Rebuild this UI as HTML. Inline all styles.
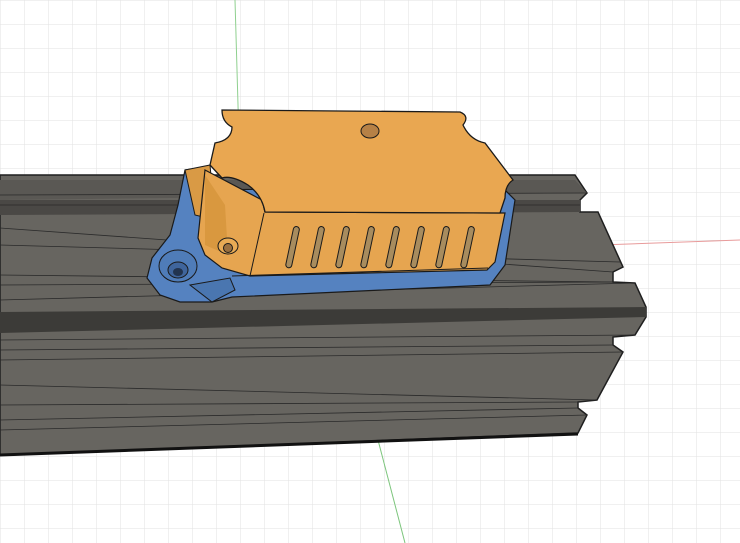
<!DOCTYPE html>
<html><head><style>html,body{margin:0;padding:0;background:#fff;overflow:hidden}svg{display:block}</style></head>
<body>
<svg width="740" height="543" viewBox="0 0 740 543" xmlns="http://www.w3.org/2000/svg">
<defs>
<pattern id="g" width="24" height="24" patternUnits="userSpaceOnUse"><path d="M0 0H24M0 0V24" stroke="#e2e2e2" stroke-width="1" fill="none"/></pattern>
</defs>
<rect width="740" height="543" fill="#fff"/>
<rect width="740" height="543" fill="url(#g)"/>
<line x1="235" y1="0" x2="240" y2="175" stroke="#8fd08f" stroke-width="1"/>
<line x1="340" y1="295" x2="405" y2="543" stroke="#7cc57c" stroke-width="1"/>
<line x1="600" y1="245" x2="740" y2="240" stroke="#e89b9b" stroke-width="1"/>
<!-- rail -->
<polygon points="0,175 575,175 587,193 580,200 580,212 598,212 623,267 613,272 613,282 635,283 646,307 646,317 635,335 613,337 613,345 623,352 597,400 578,402 578,408 587,415 578,433 0,455" fill="#676560" stroke="#1f1f1f" stroke-width="1.5"/>
<polygon points="0,180 575,180 587,193 0,200" fill="#5a5854"/>
<polygon points="0,200 580,200 580,212 0,215" fill="#4a4845"/>
<polygon points="0,312 646,307 646,317 0,333" fill="#3c3b38"/>
<g stroke="#2a2a2a" stroke-width="0.8" fill="none">
<line x1="0" y1="195" x2="587" y2="193"/><line x1="0" y1="205" x2="580" y2="205"/>
<line x1="0" y1="228" x2="613" y2="272"/><line x1="0" y1="245" x2="620" y2="262"/>
<line x1="0" y1="275" x2="613" y2="282"/><line x1="0" y1="285" x2="613" y2="282"/>
<line x1="0" y1="300" x2="635" y2="283"/><line x1="0" y1="340" x2="635" y2="335"/>
<line x1="0" y1="350" x2="613" y2="345"/><line x1="0" y1="360" x2="623" y2="352"/>
<line x1="0" y1="385" x2="597" y2="400"/><line x1="0" y1="405" x2="578" y2="402"/>
<line x1="0" y1="420" x2="578" y2="408"/><line x1="0" y1="430" x2="587" y2="415"/>
</g>
<line x1="0" y1="455" x2="578" y2="434" stroke="#111" stroke-width="3"/>
<!-- blue base -->
<polygon points="185,170 200,168 215,190 500,185 515,200 505,265 490,285 232,297 212,302 180,302 160,295 147,278 152,258 170,235 178,205" fill="#5582c0" stroke="#1a1a1a" stroke-width="1.2"/>
<polygon points="190,285 230,278 235,290 212,302" fill="#4a76b0" stroke="#1a1a1a" stroke-width="1"/>
<ellipse cx="178" cy="266" rx="19" ry="16" fill="#4f7cb8" stroke="#1a1a1a" stroke-width="1"/>
<ellipse cx="178" cy="270" rx="10" ry="8" fill="#3f659c" stroke="#1a1a1a" stroke-width="1"/>
<ellipse cx="178" cy="272" rx="5" ry="4" fill="#22344f"/>
<!-- orange left lug -->
<polygon points="185,170 210,165 215,220 195,215" fill="#d99a45" stroke="#1a1a1a" stroke-width="1"/>
<!-- orange box front face -->
<polygon points="205,170 262,200 265,212 505,213 495,262 487,270 250,276 222,268 205,255 198,238" fill="#e6a550" stroke="#1a1a1a" stroke-width="1.2"/>
<polygon points="205,175 225,205 228,255 205,245" fill="#d9983f"/>
<ellipse cx="228" cy="246" rx="10" ry="8" fill="#e8ab55" stroke="#1a1a1a" stroke-width="1"/>
<circle cx="228" cy="248" r="4.5" fill="#9a7040" stroke="#1a1a1a" stroke-width="1"/>
<line x1="250" y1="276" x2="264" y2="213" stroke="#1a1a1a" stroke-width="1"/>
<!-- top face -->
<path d="M222,110 L460,112 Q470,116 463,125 Q470,140 485,143 L513,180 Q505,185 505,198 L500,213 L265,212 Q262,195 248,185 Q232,175 222,178 L210,165 L215,143 Q232,140 232,127 Q222,122 222,110 Z" fill="#e9a751" stroke="#1a1a1a" stroke-width="1.3"/>
<ellipse cx="370" cy="131" rx="9" ry="7" fill="#b68146" stroke="#1a1a1a" stroke-width="1"/>
<!-- slots -->
<g fill="#a88c5e" stroke="#1a1a1a" stroke-width="1">
<rect x="0" y="0" width="6" height="42" rx="3" transform="translate(294,226) rotate(12)"/>
<rect x="0" y="0" width="6" height="42" rx="3" transform="translate(319,226) rotate(12)"/>
<rect x="0" y="0" width="6" height="42" rx="3" transform="translate(344,226) rotate(12)"/>
<rect x="0" y="0" width="6" height="42" rx="3" transform="translate(369,226) rotate(12)"/>
<rect x="0" y="0" width="6" height="42" rx="3" transform="translate(394,226) rotate(12)"/>
<rect x="0" y="0" width="6" height="42" rx="3" transform="translate(419,226) rotate(12)"/>
<rect x="0" y="0" width="6" height="42" rx="3" transform="translate(444,226) rotate(12)"/>
<rect x="0" y="0" width="6" height="42" rx="3" transform="translate(469,226) rotate(12)"/>
</g>
<line x1="232" y1="276" x2="488" y2="268" stroke="#1a1a1a" stroke-width="1"/>
</svg>
</body></html>
